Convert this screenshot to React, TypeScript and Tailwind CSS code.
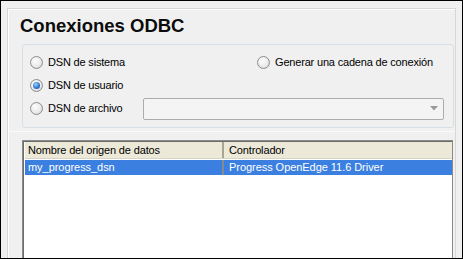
import React from "react";

const Radio = ({checked = false}: {checked?: boolean}) => {
  return (
    <span className="relative flex h-[13px] w-[13px] shrink-0 items-center justify-center rounded-full border border-[#8e8f8f] bg-[radial-gradient(circle_at_35%_35%,#ffffff,#cfcfcf)]">
      <span className="h-[9px] w-[9px] rounded-full bg-[radial-gradient(circle_at_35%_30%,#fdfdfd,#e2e2e2)]" />
      {checked && (
        <span className="absolute left-[2px] top-[2px] h-[7px] w-[7px] rounded-full bg-[radial-gradient(circle_at_40%_35%,#9ad4ff,#2a6fc9_60%,#1a4f9a)]" />
      )}
    </span>
  );
};

const RadioLabel = ({label, checked}: {label: string; checked?: boolean}) => (
  <div className="flex items-center gap-[5px]">
    <Radio checked={checked} />
    <span className="text-[11px] leading-[13px] tracking-[-0.18px] text-black">{label}</span>
  </div>
);

export default function App() {
  return (
    <div className="h-[259px] w-[463px] overflow-hidden border border-black bg-[#f0f0f0] pl-[6px] pr-[6px] pt-[7px] font-['Liberation_Sans',Arial,sans-serif]">
      <div className="h-[300px] w-[449px] border border-[#d7d7d7] shadow-[inset_1px_1px_0_#ffffff]">
        {/* title */}
        <h1 className="mt-[6px] pl-[12px] text-[18.5px] font-bold leading-[22px] text-[#0c0c0c]">
          Conexiones ODBC
        </h1>

        {/* group box */}
        <div className="ml-[14px] mt-[7px] h-[84px] w-[432px] rounded-[3px] border border-[#d5dfe5] pl-[7px] pr-[9px] pt-[6px]">
          <div className="flex h-[23px] items-center">
            <div className="w-[227px]">
              <RadioLabel label="DSN de sistema" />
            </div>
            <RadioLabel label="Generar una cadena de conexión" />
          </div>
          <div className="flex h-[23px] items-center">
            <RadioLabel label="DSN de usuario" checked />
          </div>
          <div className="flex h-[23px] items-center">
            <div className="w-[113px]">
              <RadioLabel label="DSN de archivo" />
            </div>
            <div className="flex h-[22px] flex-1 items-center justify-end rounded-[2px] border border-[#acacac] bg-[#f4f4f4] pr-[5px]">
              <svg width="8" height="5" viewBox="0 0 8 5">
                <path d="M0 0 L8 0 L4 4.5 Z" fill="#9a9a9a" />
              </svg>
            </div>
          </div>
        </div>

        {/* lower section */}
        <div className="mt-[3px] border-t border-[#fbfbfb] pl-[14px] pt-[8px]">
          <div className="h-[200px] w-[431px] border border-[#8c8c8c] bg-white shadow-[inset_1px_1px_0_#6b6b6b]">
            <div className="ml-[2px] mt-[1px] flex h-[17px] w-[427px] items-center border-b border-[#d8d4c4] bg-[#ece9d8] text-[11px] tracking-[-0.15px] text-black">
              <div className="w-[197px] pl-[3px]">Nombre del origen de datos</div>
              <div className="h-full w-[2px] bg-[#a8a596]" />
              <div className="pl-[5px]">Controlador</div>
            </div>
            <div className="ml-[2px] mt-[1px] flex h-[15px] w-[427px] items-center bg-[#3b80e0] text-[11px] tracking-[-0.05px] text-white">
              <div className="w-[197px] pl-[3px]">my_progress_dsn</div>
              <div className="h-full w-[2px] bg-[#8a8a8a]" />
              <div className="pl-[5px]">Progress OpenEdge 11.6 Driver</div>
            </div>
          </div>
        </div>
      </div>
    </div>
  );
}
